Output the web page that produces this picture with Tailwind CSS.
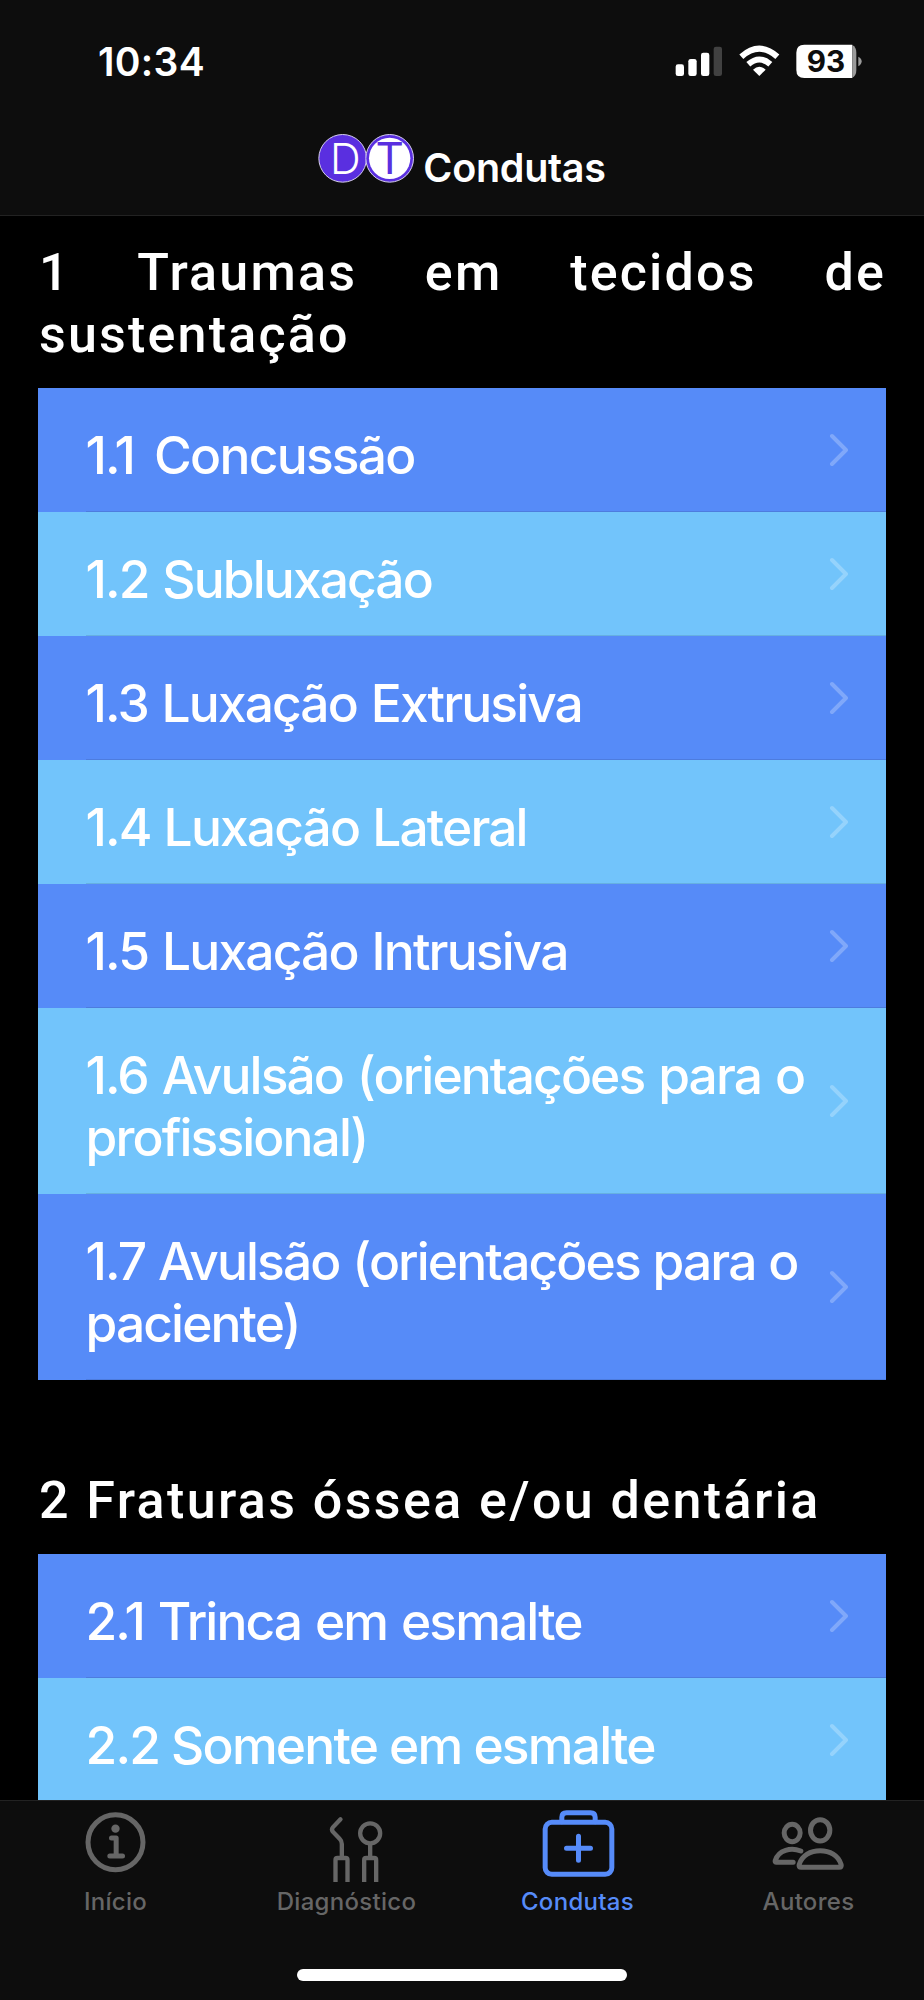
<!DOCTYPE html>
<html lang="pt-BR">
<head>
    <meta charset="UTF-8">
    <meta name="viewport" content="width=device-width, initial-scale=1.0">
    <title>Condutas</title>

    <!-- Tailwind CSS -->
    <script src="https://cdn.jsdelivr.net/npm/@tailwindcss/browser@4"></script>
</head>

<body class="bg-black text-white font-['Inter',sans-serif]">

    <div class="flex flex-col w-[924px] h-[2000px] overflow-hidden">

        <!-- Header -->
        <header class="shrink-0 h-[216px] bg-[#0d0d0d] border-b border-[#222222]">
            <div class="flex justify-between h-[110px]">
                <span class="pl-[98px] pt-[38px] text-[39px] leading-[48px] font-semibold tracking-[0.3px]">10:34</span>
                <!-- Signal, wifi and battery -->
                <svg class="w-[284px] h-[90px] mt-5" viewBox="0 0 852 270" fill="#ffffff">
                    <rect x="107" y="133" width="25" height="35" rx="7"/>
                    <rect x="145" y="117" width="25" height="51" rx="7"/>
                    <rect x="183" y="98" width="25" height="70" rx="7"/>
                    <rect x="221" y="80" width="25" height="88" rx="7" fill="#414141"/>
                    <path d="M358 168 L339 149 Q358 132 377 149 Z"/>
                    <path d="M325 133 Q358 104 391 133" fill="none" stroke="#ffffff" stroke-width="18"/>
                    <path d="M304 110 Q358 62 412 110" fill="none" stroke="#ffffff" stroke-width="18"/>
                    <path d="M493 74 H637 V174 H493 Q469 174 469 150 V98 Q469 74 493 74 Z"/>
                    <path d="M637 75 Q649 81 649 98 V150 Q649 167 637 173 Z" fill="#9a9a9a"/>
                    <path d="M655 110 Q665 115 665 124 Q665 133 655 139 Z" fill="#9a9a9a"/>
                    <text x="558" y="156" text-anchor="middle" fill="#0d0d0d" font-size="89" font-weight="700">93</text>
                </svg>
            </div>
            <div class="flex justify-center h-[105px]">
                <svg class="w-[96px] h-[70px] mt-[13px] overflow-visible" viewBox="0 -30 288 210">
                    <circle cx="74" cy="76" r="71.5" fill="#5a2fe0" stroke="#d6cfee" stroke-width="3"/>
                    <circle cx="215" cy="76" r="71.5" fill="#5a2fe0" stroke="#d6cfee" stroke-width="3"/>
                    <circle cx="215" cy="76" r="62" fill="#ffffff"/>
                    <text x="82" y="122" text-anchor="middle" fill="#ffffff" font-size="128" font-weight="300">D</text>
                    <text x="215" y="124" text-anchor="middle" fill="#5a2fe0" font-size="132">T</text>
                </svg>
                <h1 class="ml-[9px] mt-[34px] text-[39.5px] leading-[48px] font-semibold tracking-[-0.3px]">Condutas</h1>
            </div>
        </header>

        <!-- Sections -->
        <main class="grow min-h-0 overflow-hidden pl-[38px] pr-[38px]">
            <h2 class="h-[172px] pt-[26px] pl-px font-['Roboto',sans-serif] text-[52px] leading-[62px] font-medium tracking-[2.2px] text-justify">1 Traumas em tecidos de sustentação</h2>
            <ul id="lista1"></ul>
            <h2 class="h-[174px] pt-[90px] pl-px font-['Roboto',sans-serif] text-[52px] leading-[62px] font-medium tracking-[2.4px]">2 Fraturas óssea e/ou dentária</h2>
            <ul id="lista2"></ul>
        </main>

        <!-- Tab bar -->
        <nav class="shrink-0 h-[200px] bg-[#0d0d0d] border-t border-[#222222] text-[#666666]">
            <div class="grid grid-cols-4 h-[168px] text-[24px] leading-[30px] font-[450] tracking-[0.3px]">
                <a class="flex flex-col items-center pt-[1px]">
                    <svg class="w-[90px] h-[72px]" viewBox="121.5 66 270 216" fill="none" stroke="currentColor" stroke-width="15" stroke-linecap="round" stroke-linejoin="round">
                        <circle cx="255" cy="187" r="82.5"/>
                        <circle cx="255" cy="146" r="12.5" fill="currentColor" stroke="none"/>
                        <path d="M243 174 H257 V228 M238 228 H276"/>
                    </svg>
                    <span class="mt-[13px]">Início</span>
                </a>
                <a class="flex flex-col items-center pt-[1px]">
                    <svg class="w-[90px] h-[82px]" viewBox="814.5 66 270 246" fill="none" stroke="currentColor" stroke-width="13">
                        <path d="M930 118 L907 142 Q902 148 907 155 L928 177 Q934 183 934 192 V232" stroke-linecap="round"/>
                        <path d="M915 306 V240 Q915 234 921 234 H945 Q951 234 951 240 V306"/>
                        <circle cx="1019" cy="160" r="30"/>
                        <path d="M1019 190 V232"/>
                        <path d="M1001 306 V240 Q1001 234 1007 234 H1031 Q1037 234 1037 240 V306"/>
                    </svg>
                    <span class="mt-[3px]">Diagnóstico</span>
                </a>
                <a class="flex flex-col items-center pt-[1px] text-[#568bf9]">
                    <svg class="w-[90px] h-[76px]" viewBox="97.5 66 270 228" fill="none" stroke="currentColor" stroke-width="15" stroke-linecap="round">
                        <rect x="134" y="127" width="200" height="156" rx="20"/>
                        <path d="M184 125 V112 Q184 98 198 98 H270 Q284 98 284 112 V125"/>
                        <path d="M198 205 H270 M234 169 V241"/>
                    </svg>
                    <span class="mt-[9px]">Condutas</span>
                </a>
                <a class="flex flex-col items-center pt-[1px]">
                    <svg class="w-[90px] h-[72px]" viewBox="790.5 66 270 216" fill="none" stroke="currentColor" stroke-width="15" stroke-linecap="round" stroke-linejoin="round">
                        <ellipse cx="875" cy="159" rx="24" ry="26"/>
                        <ellipse cx="959" cy="151" rx="29" ry="32"/>
                        <path d="M901 213 C872 202 834 209 824 242 Q823 247 828 247 H878"/>
                        <path d="M902 262 Q894 262 896 254 C904 225 931 212 959 212 C987 212 1014 225 1022 254 Q1024 262 1016 262 Z"/>
                    </svg>
                    <span class="mt-[13px]">Autores</span>
                </a>
            </div>
            <div class="w-[330px] h-3 mx-auto rounded-full bg-white"></div>
        </nav>
    </div>

    <script>
        const lista1 = [
            { text: '1.1 Concussão', tracking: 'tracking-[-1.75px] [word-spacing:8px]' },
            { text: '1.2 Subluxação', tracking: 'tracking-[-1.9px] [word-spacing:2px]' },
            { text: '1.3 Luxação Extrusiva', tracking: 'tracking-[-1.9px] [word-spacing:2px]' },
            { text: '1.4 Luxação Lateral', tracking: 'tracking-[-1.85px] [word-spacing:1px]' },
            { text: '1.5 Luxação Intrusiva', tracking: 'tracking-[-1.85px] [word-spacing:2px]' },
            { text: '1.6 Avulsão (orientações para o profissional)', tracking: 'tracking-[-1.9px] [word-spacing:2px]' },
            { text: '1.7 Avulsão (orientações para o paciente)', tracking: 'tracking-[-1.9px] [word-spacing:1px]' }
        ];
        const lista2 = [
            { text: '2.1 Trinca em esmalte', tracking: 'tracking-[-1.9px] [word-spacing:2px]' },
            { text: '2.2 Somente em esmalte', tracking: 'tracking-[-1.8px]' }
        ];

        // Rows alternate between the two blues
        function renderList(id, items) {
            document.getElementById(id).innerHTML = items.map((item, i) => `
                <li class="relative flex items-center pl-[47.5px] pr-[38px] after:absolute after:left-12 after:right-0 after:bottom-0 after:h-px after:bg-black/10 ${i % 2 ? 'bg-[#72c4fb]' : 'bg-[#568bf8]'}">
                    <span class="grow pt-9 pb-[26px] text-[51.5px] leading-[62px] font-[460] ${item.tracking}">${item.text}</span>
                    <svg class="shrink-0 w-[19px] h-[34px]" viewBox="0 0 19 34" fill="none" stroke="#ffffff" stroke-opacity="0.25" stroke-width="4" stroke-linecap="round" stroke-linejoin="round">
                        <path d="M3 3 L17 17 L3 31"/>
                    </svg>
                </li>`).join('');
        }

        renderList('lista1', lista1);
        renderList('lista2', lista2);
    </script>

</body>
</html>
